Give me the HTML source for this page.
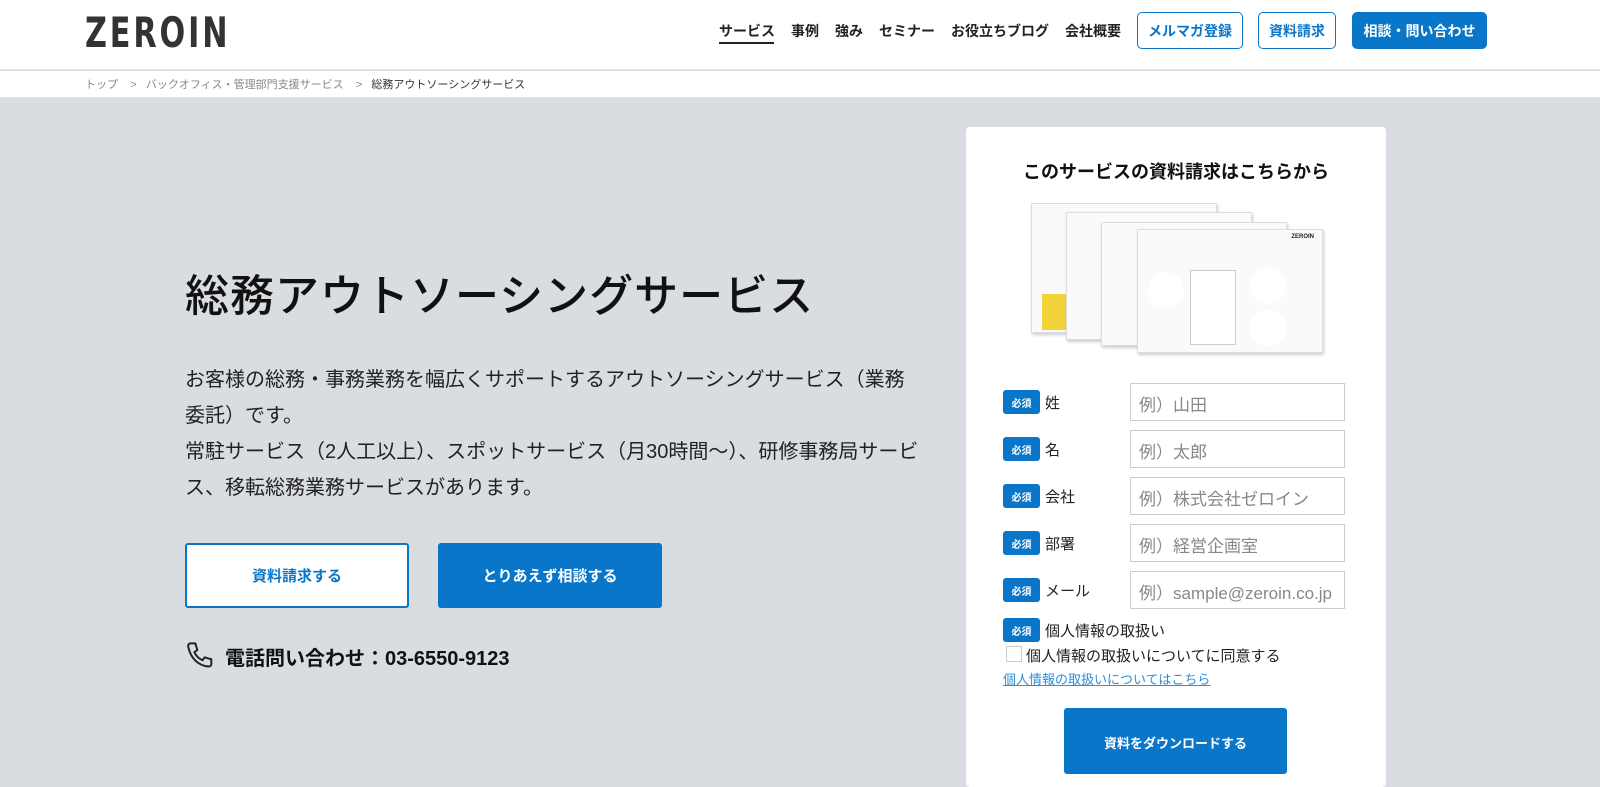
<!DOCTYPE html>
<html><head><meta charset="utf-8"><style>
*{box-sizing:border-box;margin:0;padding:0}
body{width:1600px;height:774px;overflow:hidden;background:#d9dce0;font-family:"Liberation Sans","Noto Sans CJK JP",sans-serif;color:#222;position:relative}
.abs{position:absolute}
header{position:absolute;left:0;top:0;width:1600px;height:70px;background:#fff;border-bottom:1px solid #e6e6e6}
.logo{left:85px;top:8px;font-size:42px;font-weight:bold;letter-spacing:4px;color:#333;font-family:"DejaVu Sans","Liberation Sans",sans-serif;transform:scaleX(0.72);transform-origin:left top}
.nav{top:21px;font-size:14px;font-weight:bold;color:#222}
.nbtn{top:12px;height:37px;border:1.5px solid #0a76c9;border-radius:5px;color:#0a76c9;font-size:14px;font-weight:bold;display:flex;align-items:center;justify-content:center}
.bc{left:0;top:71px;width:1600px;height:27px;background:#fff;border-bottom:1px solid #e3e3e3;font-size:11px;color:#888;padding:5px 0 0 85px}
.card{left:966px;top:127px;width:420px;height:660px;background:#fff;border-radius:4px}
.badge{left:1003px;width:37px;height:24px;background:#0a76c9;color:#fff;border-radius:3px;font-size:10px;font-weight:bold;display:flex;align-items:center;justify-content:center}
.lab{left:1045px;font-size:15px;color:#222}
.inp{left:1130px;width:215px;height:38px;border:1px solid #ccc;font-size:17px;color:#888;padding:7px 0 0 8px}
.sheet{background:#fafafa;border:1px solid #ddd;box-shadow:1px 2px 3px rgba(0,0,0,.2)}
</style></head><body>
<header>
<div class="abs logo">ZEROIN</div>
<div class="abs nav" style="left:719px">サービス</div>
<div class="abs" style="left:719px;top:42px;width:55px;height:2px;background:#222"></div>
<div class="abs nav" style="left:791px">事例</div>
<div class="abs nav" style="left:835px">強み</div>
<div class="abs nav" style="left:879px">セミナー</div>
<div class="abs nav" style="left:951px">お役立ちブログ</div>
<div class="abs nav" style="left:1065px">会社概要</div>
<div class="abs nbtn" style="left:1137px;width:106px">メルマガ登録</div>
<div class="abs nbtn" style="left:1258px;width:78px">資料請求</div>
<div class="abs nbtn" style="left:1352px;width:135px;background:#0a76c9;color:#fff">相談・問い合わせ</div>
</header>
<div class="abs bc">トップ &nbsp;&nbsp; &gt; &nbsp; バックオフィス・管理部門支援サービス &nbsp;&nbsp; &gt; &nbsp; <span style="color:#333">総務アウトソーシングサービス</span></div>

<div class="abs" style="left:185px;top:260px;font-size:44px;font-weight:500;color:#111;letter-spacing:1px">総務アウトソーシングサービス</div>
<div class="abs" style="left:185px;top:362px;width:735px;font-size:20px;line-height:36px;color:#222">お客様の総務・事務業務を幅広くサポートするアウトソーシングサービス（業務委託）です。<br>常駐サービス（2人工以上）、スポットサービス（月30時間〜）、研修事務局サービス、移転総務業務サービスがあります。</div>
<div class="abs" style="left:185px;top:543px;width:224px;height:65px;background:#fff;border:2px solid #0a76c9;border-radius:3px;color:#0a76c9;font-size:15px;font-weight:bold;display:flex;align-items:center;justify-content:center">資料請求する</div>
<div class="abs" style="left:438px;top:543px;width:224px;height:65px;background:#0a76c9;border-radius:3px;color:#fff;font-size:15px;font-weight:bold;display:flex;align-items:center;justify-content:center">とりあえず相談する</div>
<svg class="abs" style="left:184px;top:640px" width="32" height="32" viewBox="0 0 24 24" fill="none" stroke="#222" stroke-width="1.5" stroke-linejoin="round"><path d="M5 2.5l3.5 0 1.5 5-2.2 1.6c1.2 2.8 3.3 4.9 6.1 6.1l1.6-2.2 5 1.5v3.5c0 1.2-1 2-2.2 1.9C10.5 19.2 4.8 13.5 3.1 4.7 3 3.5 3.8 2.5 5 2.5z"/></svg>
<div class="abs" style="left:225px;top:642px;font-size:20px;font-weight:bold;color:#111">電話問い合わせ：03-6550-9123</div>

<div class="abs card"></div>
<div class="abs" style="left:966px;top:158px;width:420px;text-align:center;font-size:18px;font-weight:bold;color:#111">このサービスの資料請求はこちらから</div>
<div class="abs sheet" style="left:1031px;top:203px;width:186px;height:130px"><div style="position:absolute;left:10px;top:90px;width:40px;height:36px;background:#f3d23b"></div></div>
<div class="abs sheet" style="left:1066px;top:212px;width:186px;height:128px"></div>
<div class="abs sheet" style="left:1101px;top:222px;width:186px;height:124px"></div>
<div class="abs sheet" style="left:1137px;top:229px;width:186px;height:124px">
<div style="position:absolute;right:8px;top:4px;font-size:6px;font-weight:bold">ZEROIN</div>
<div style="position:absolute;left:52px;top:40px;width:46px;height:75px;border:1px solid #ccc;background:#fff"></div>
<div style="position:absolute;left:10px;top:42px;width:36px;height:36px;border-radius:50%;background:#fff"></div>
<div style="position:absolute;left:112px;top:38px;width:36px;height:36px;border-radius:50%;background:#fff"></div>
<div style="position:absolute;left:112px;top:80px;width:36px;height:36px;border-radius:50%;background:#fff"></div>
</div>

<div class="abs badge" style="top:390px">必須</div><div class="abs lab" style="top:392px">姓</div><div class="abs inp" style="top:383px">例）山田</div>
<div class="abs badge" style="top:437px">必須</div><div class="abs lab" style="top:439px">名</div><div class="abs inp" style="top:430px">例）太郎</div>
<div class="abs badge" style="top:484px">必須</div><div class="abs lab" style="top:486px">会社</div><div class="abs inp" style="top:477px">例）株式会社ゼロイン</div>
<div class="abs badge" style="top:531px">必須</div><div class="abs lab" style="top:533px">部署</div><div class="abs inp" style="top:524px">例）経営企画室</div>
<div class="abs badge" style="top:578px">必須</div><div class="abs lab" style="top:580px">メール</div><div class="abs inp" style="top:571px">例）sample@zeroin.co.jp</div>
<div class="abs badge" style="top:618px">必須</div><div class="abs lab" style="top:620px">個人情報の取扱い</div>
<div class="abs" style="left:1006px;top:646px;width:16px;height:16px;border:1px solid #ccc;background:#fff"></div>
<div class="abs" style="left:1026px;top:645px;font-size:15px">個人情報の取扱いについてに同意する</div>
<div class="abs" style="left:1003px;top:669px;font-size:13px;color:#2a8fd8;text-decoration:underline">個人情報の取扱いについてはこちら</div>
<div class="abs" style="left:1064px;top:708px;width:223px;height:66px;background:#0a76c9;border-radius:3px;color:#fff;font-size:13px;font-weight:bold;display:flex;align-items:center;justify-content:center;padding-top:2px">資料をダウンロードする</div>
</body></html>
